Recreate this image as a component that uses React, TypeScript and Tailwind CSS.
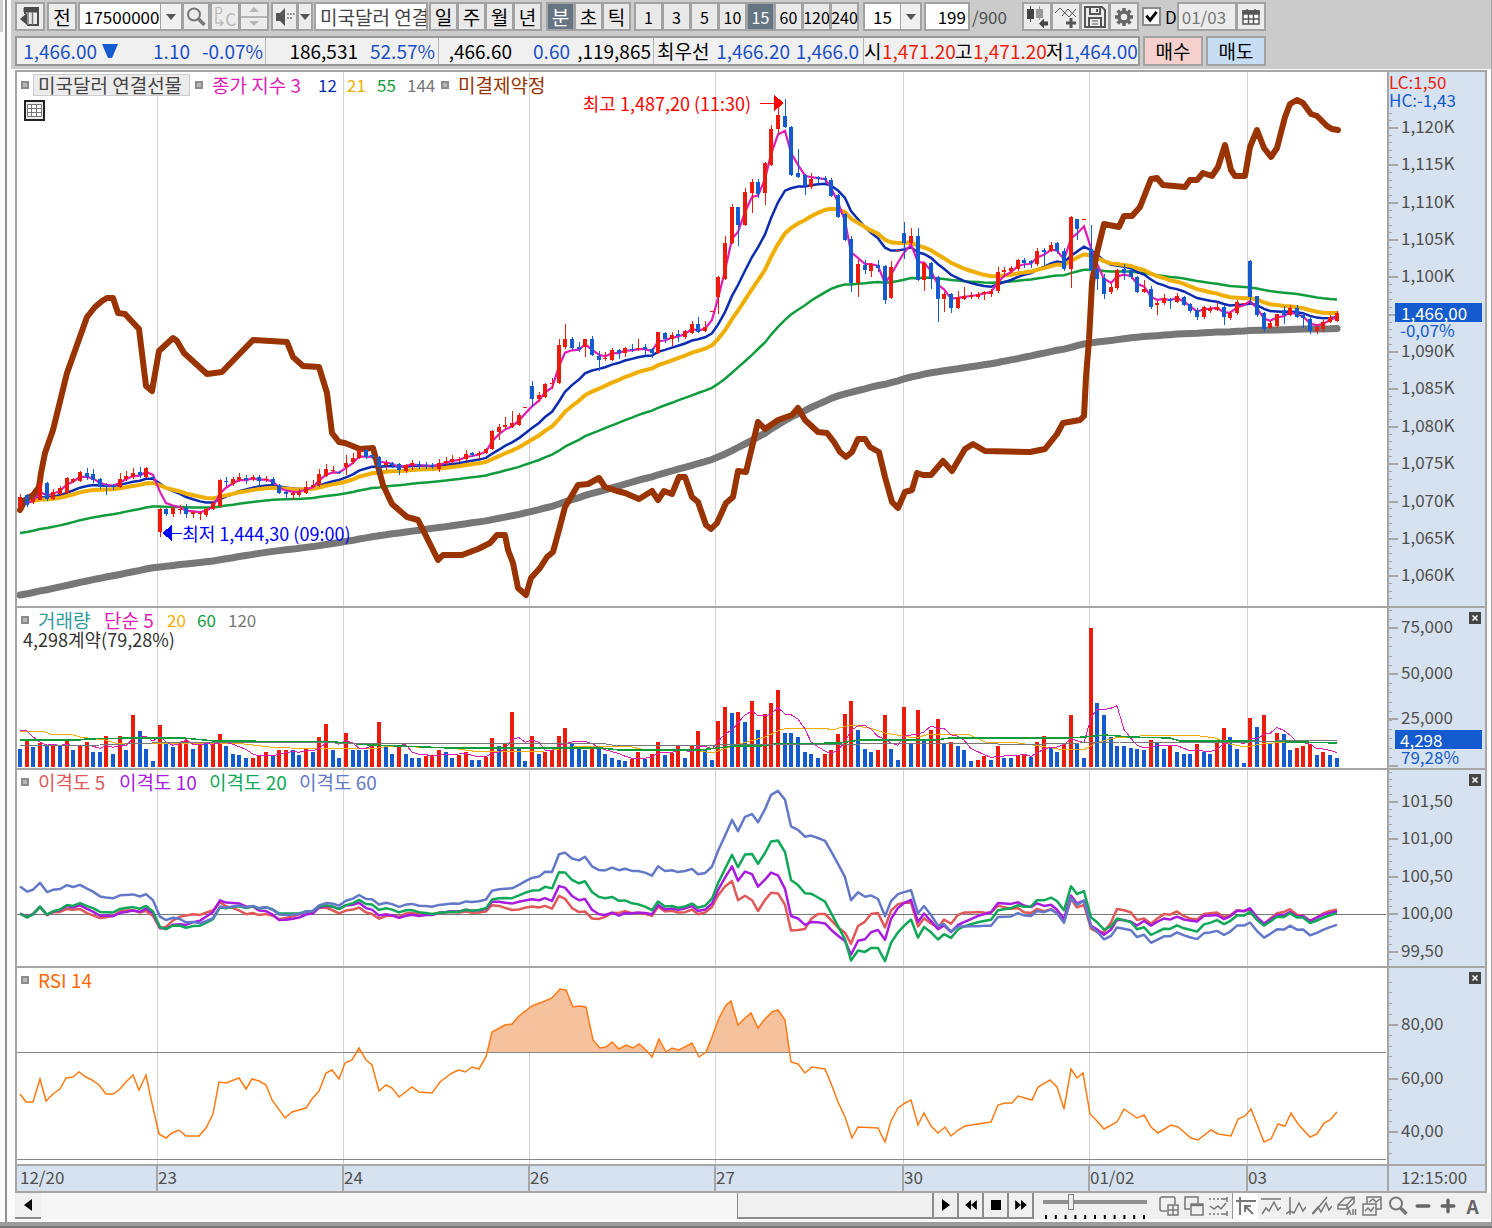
import type { ReactNode } from "react";
import { Minus, Plus } from "lucide-react";

const UP = "#eb1c0c";
const DOWN = "#135bce";

const PLOT_LEFT = 17;
const PLOT_WIDTH = 1370;
const FIRST_BAR = 20;
const BAR_STEP = 6.65;

const barX = (i: number) => Math.round(FIRST_BAR + i * BAR_STEP);

// direction, high, body top, body bottom, low
const CANDLES = `
R494,497,507,509 B494,495,505,507 R498,499,502,504 R477,483,500,500 B482,483,499,501 R489,492,499,500 R486,488,494,496
R477,478,493,494 R478,479,482,483 R471,472,481,482 B468,473,477,480 B469,474,480,483 B478,479,487,489 B483,485,487,495
B484,485,487,490 R473,479,487,488 R471,476,479,481 R468,473,477,479 B467,472,475,478 R467,468,477,478 B476,477,478,479
R508,509,532,537 B508,509,514,516 R507,508,514,517 R505,509,510,514 B504,508,514,518 R511,512,514,518 R511,513,514,520
R508,509,515,517 R501,503,509,510 R479,480,506,508 B477,481,482,486 R477,479,484,486 R473,477,480,482 B475,478,480,484
R475,477,479,481 B475,477,481,486 R476,479,480,482 B477,479,484,485 B484,485,493,494 B490,492,494,499 R492,493,495,500
R489,492,495,497 R481,487,493,494 R480,485,487,488 R469,474,485,487 R464,469,476,477 R466,470,471,473 B471,472,473,474
R455,463,467,475 R453,458,462,464 R449,450,458,459 B449,450,457,459 B454,455,457,459 B456,457,467,475 R460,463,465,470
B462,463,465,468 B463,464,470,475 R464,465,471,473 R460,463,465,470 B461,464,466,469 B462,465,466,469 B463,465,467,469
R459,463,469,472 R457,461,463,466 R455,459,462,464 R457,459,460,462 R450,454,459,461 B452,453,455,457 R451,453,455,459
R448,449,453,454 R430,431,449,450 R424,427,432,440 R417,425,427,429 R411,423,427,428 R413,415,425,426 R407,407,408,408
B381,386,399,407 R392,395,399,402 R383,384,397,398 R378,383,384,389 R339,345,383,384 R324,339,347,349 B337,339,348,350
B342,347,349,352 R339,339,347,357 B336,339,355,356 B351,356,360,371 R352,358,359,361 R348,350,360,361 B349,350,353,359
R347,348,353,357 B344,349,350,352 R339,348,349,351 B344,347,349,356 B348,349,353,358 R332,332,353,354 B332,333,339,343
R332,335,339,346 B330,334,336,342 R330,331,337,339 R321,324,333,334 B317,324,332,333 R321,327,331,332 R311,311,312,312
R276,277,297,314 R236,243,279,280 R204,207,243,244 B207,207,225,246 R188,192,225,226 R179,182,193,213 B179,182,194,198
R162,163,193,205 R125,129,165,166 R106,115,129,134 B99,116,127,128 B126,127,175,176 B149,173,177,178 B174,175,186,195
R173,179,187,189 B176,177,179,183 B176,178,180,184 B178,180,196,197 B194,195,217,218 B213,214,240,241 B236,239,283,292
R260,264,283,297 B260,265,270,274 R263,264,271,277 B260,265,268,272 B265,266,300,304 R261,267,298,299 R250,250,251,251
B222,233,243,259 R228,236,243,244 B228,236,280,281 R262,263,280,291 B262,263,279,289 B276,277,299,322 R292,294,299,312
B293,294,308,313 R291,297,308,309 R287,296,299,300 R292,295,297,299 R292,294,297,299 R291,292,294,300 R289,291,294,297
R267,272,291,293 R267,270,272,276 R266,268,271,273 R259,260,269,271 B258,260,263,268 B260,261,263,268 R248,251,264,266
B248,250,252,265 R242,245,251,252 B242,243,251,254 B248,251,269,271 R216,217,269,288 B219,219,229,240 R219,219,220,220
B225,249,270,272 B268,269,279,290 B274,278,294,299 R283,287,292,294 R269,270,288,290 B264,269,273,280 B268,270,277,279
B276,277,292,293 R280,289,292,293 B286,289,307,309 R301,303,305,315 R294,298,303,305 B298,299,301,309 R293,296,302,303
B296,297,305,306 B303,304,311,313 B308,310,317,320 R306,307,317,319 R306,308,311,313 R302,307,310,311 B305,307,317,325
R311,313,318,320 R300,302,313,315 R303,303,304,304 B260,261,297,304 B296,296,315,317 B312,313,329,332 R320,323,328,329
R314,314,326,328 B306,310,315,324 R305,308,315,316 B305,308,317,318 B313,315,318,328 B317,319,331,334 R325,327,331,334
R320,322,329,332 R315,317,322,323 R311,313,321,322
`.trim().split(/\s+/).map((row) => {
  const [high, top, bottom, low] = row.slice(1).split(",").map(Number);
  const up = row[0] === "R";
  return { up, high, top, bottom, low, close: up ? top : bottom };
});

const VOLUMES = `
B18 R26 B20 R24 B21 R22 B21 R26 B17 R21 R25 B15 B15 R31 B13 R31 B17 R52 B36 B18 B6 R42 B23 B20 R25 R27 B18 R23 B23 R23
R33 B21 B13 B12 B9 R9 R12 R15 B11 R17 R17 B17 B12 R19 B15 R30 R43 B17 B9 R34 B17 B17 B17 R21 R45 B20 B13 R20 B13 B9 B9
R11 R12 R17 B15 B9 R12 R15 B7 B7 R10 R29 B21 R23 R55 B19 B6 R31 B13 R15 R17 R31 R39 B23 B19 B17 R19 B19 B13 B9 B7 B6
R8 R15 B8 R13 R25 B12 R14 R21 B9 R21 R36 B17 B7 R46 R60 B54 R55 B45 R66 B37 R53 R64 R77 B34 B34 B30 B15 B13 B9 R13 R17
R33 R53 R66 B37 B18 B15 R17 R52 B18 B7 R60 B23 R57 B28 R37 R48 B23 R25 B21 B17 B6 R7 R11 B7 R21 B9 B9 R12 R13 B10 R25
R31 B19 B15 R23 R52 B23 B9 R139 B64 B52 B30 B21 B21 B19 B18 B17 R27 B25 B18 R22 B15 B13 B13 R23 B15 B13 R25 R39 B30 B18
B4 R49 B40 R52 B23 R34 B33 B17 R19 R21 R23 B12 R15 B12 B9
`.trim().split(/\s+/).map((v) => ({ up: v[0] === "R", size: Number(v.slice(1)) }));

const OPEN_INTEREST =
  "20,510 25,500 33,495 39,487 41,473 45,453 53,430 67,373 87,317 95,307 102,301 107,298 113,298 118,313 125,314 139,329 146,386 152,391 159,351 173,338 177,341 184,353 195,363 207,374 222,372 253,340 287,342 293,357 303,366 319,367 327,393 332,433 339,442 345,443 360,449 373,448 383,485 392,504 407,517 418,520 428,540 438,560 443,555 462,555 478,549 490,543 497,535 505,535 508,550 513,563 518,588 526,595 531,578 540,568 547,557 553,552 559,530 565,507 578,485 588,484 599,478 605,487 617,491 625,493 639,499 652,491 658,500 664,491 672,494 679,477 685,477 692,497 698,502 706,525 711,529 717,523 726,503 733,497 738,471 746,472 753,443 758,422 765,429 778,420 792,415 798,408 805,420 818,432 827,433 834,442 840,452 846,457 852,452 858,439 865,439 870,447 879,452 885,477 892,502 898,508 905,492 912,490 917,473 923,475 931,475 943,461 952,471 965,449 973,444 985,451 1030,452 1045,449 1057,434 1063,423 1080,420 1084,416 1086,377 1089,340 1092,283 1096,257 1104,224 1119,227 1124,216 1132,216 1140,207 1151,179 1157,178 1163,185 1185,187 1190,180 1197,180 1203,173 1212,176 1218,167 1225,145 1231,170 1235,176 1245,176 1250,147 1257,130 1264,148 1271,157 1277,148 1285,117 1290,104 1297,100 1303,103 1311,114 1317,116 1327,126 1332,129 1338,130";

const VOLUME_MA20 =
  "20,731 43,731 50,734 70,734 80,737 105,740 115,743 150,744 190,743 235,743 270,747 290,748 372,749 390,746 415,747 450,748 480,752 545,751 580,746 628,746 645,750 700,751 712,753 730,747 750,741 765,737 780,730 788,728 825,728 832,730 850,725 870,728 885,733 915,738 930,734 968,734 985,742 1010,742 1040,746 1058,749 1084,750 1095,743 1115,738 1140,736 1170,735 1200,736 1215,738 1230,744 1245,747 1262,744 1285,742 1337,742";
const VOLUME_MA60 =
  "20,740 80,740 85,739 130,738 183,738 215,741 255,741 260,742 335,742 370,745 400,746 450,748 600,748 620,750 700,750 735,746 760,746 775,744 840,743 860,740 935,740 950,738 1065,738 1085,737 1105,735 1130,737 1170,738 1180,741 1240,741 1300,742 1337,743";
const VOLUME_MA120 =
  "20,746 100,745 125,744 180,742 335,743 600,743 612,745 720,745 860,744 900,743 985,743 1010,745 1080,743 1120,742 1250,742 1300,740 1337,740";

const RSI =
  "20,1094 26,1102 33,1102 40,1079 46,1101 53,1094 60,1089 66,1078 73,1077 79,1072 86,1077 92,1080 99,1085 106,1094 113,1094 119,1090 126,1082 133,1075 139,1090 146,1075 151,1099 159,1134 166,1138 172,1133 179,1130 186,1136 199,1136 206,1128 213,1114 219,1082 226,1083 239,1078 246,1089 252,1079 259,1081 266,1085 272,1100 285,1118 292,1112 306,1108 312,1099 319,1091 326,1073 332,1070 339,1079 345,1063 352,1060 359,1048 366,1060 372,1065 379,1091 386,1085 392,1088 399,1097 412,1087 419,1092 432,1093 440,1082 452,1073 459,1070 465,1072 472,1067 479,1069 486,1057 492,1032 505,1025 512,1024 519,1016 532,1006 545,1001 552,998 560,989 566,990 573,1007 579,1006 586,1007 593,1040 600,1048 606,1047 612,1042 619,1049 626,1045 633,1048 639,1044 646,1050 652,1057 659,1039 666,1052 672,1048 679,1050 692,1043 699,1057 706,1052 712,1037 719,1018 726,1005 731,1001 738,1025 745,1018 751,1013 758,1028 765,1019 772,1012 778,1010 785,1020 791,1062 798,1064 805,1073 812,1067 825,1069 832,1086 838,1102 845,1117 852,1138 858,1127 878,1128 885,1142 891,1121 898,1108 905,1103 911,1100 918,1125 924,1113 931,1126 938,1133 945,1127 951,1136 958,1130 965,1126 991,1122 998,1105 1005,1103 1012,1103 1018,1096 1032,1100 1038,1087 1050,1080 1057,1087 1064,1109 1071,1069 1077,1078 1083,1073 1090,1114 1097,1121 1104,1129 1117,1122 1124,1109 1137,1118 1144,1115 1151,1127 1158,1133 1171,1125 1178,1127 1191,1138 1198,1140 1211,1130 1218,1134 1231,1136 1238,1119 1245,1116 1251,1109 1264,1142 1271,1139 1278,1124 1285,1126 1291,1113 1298,1124 1310,1137 1317,1134 1324,1123 1330,1120 1337,1112";

const closes = CANDLES.map((c) => c.close);

// closes of the bars before the first visible one, oldest first
const HISTORY = [...Array(12).fill(634), ...Array(15).fill(602), ...Array(32).fill(498)] as number[];

function ema(length: number, seed: number) {
  const k = 2 / (length + 1);
  let prev = seed;
  return closes.map((c, i) => {
    prev = i === 0 ? seed : prev + k * (c - prev);
    return `${barX(i)},${prev.toFixed(1)}`;
  }).join(" ");
}

const toPrice = (y: number) => 1487.2 - (y - 99) * 0.0979;

function disparity(length: number) {
  const series = [...HISTORY, ...closes].map(toPrice);
  return closes.map((_, i) => {
    const end = HISTORY.length + i + 1;
    const avg = series.slice(end - length, end).reduce((a, b) => a + b, 0) / length;
    const value = (series[end - 1] / avg) * 100;
    return `${barX(i)},${(914 - (value - 100) * 75).toFixed(1)}`;
  }).join(" ");
}

const volumeMa5 = VOLUMES.map((_, i) => {
  const lead = [37, 36, 30, 25];
  const avg = i < 4 ? lead[i] : VOLUMES.slice(i - 4, i + 1).reduce((a, v) => a + v.size, 0) / 5;
  return `${barX(i)},${(767 - avg).toFixed(1)}`;
}).join(" ");

const DAYS = [
  { x: 157, label: "23" },
  { x: 343, label: "24" },
  { x: 529, label: "26" },
  { x: 715, label: "27" },
  { x: 903, label: "30" },
  { x: 1089, label: "01/02" },
  { x: 1247, label: "03" }
];

type Tick = { y: number; label?: string };

const priceTicks: Tick[] = [1120, 1115, 1110, 1105, 1100, 1095, 1090, 1085, 1080, 1075, 1070, 1065, 1060].map((v, i) => ({
  y: 128 + i * 37.35,
  label: v === 1095 ? undefined : `1,${String(v).slice(1)}K`
}));
const volumeTicks: Tick[] = [{ y: 628, label: "75,000" }, { y: 674, label: "50,000" }, { y: 719, label: "25,000" }, { y: 766 }];
const disparityTicks: Tick[] = ["101,50", "101,00", "100,50", "100,00", "99,50"].map((label, i) => ({ y: 802 + i * 37.4, label }));
const rsiTicks: Tick[] = ["80,00", "60,00", "40,00"].map((label, i) => ({ y: 1025 + i * 53.5, label }));

function minorTicks(from: number, to: number, step: number) {
  const list: number[] = [];
  for (let y = from; y < to; y += step) list.push(y);
  return list;
}

type PanelProps = {
  top: number;
  height: number;
  className: string;
  ticks: Tick[];
  minor: number[];
  closable?: boolean;
  chart: ReactNode;
  axis?: ReactNode;
  children: ReactNode;
};

function Panel({ top, height, className, ticks, minor, closable, chart, axis, children }: PanelProps) {
  const pct = (y: number) => `${((y - top) / height) * 100}%`;
  return (
    <section className={`flex border-b-2 border-[#a6a6a6] ${className}`}>
      <div className="relative min-w-0 flex-1 bg-white">
        <svg
          className="absolute inset-0 h-full w-full"
          viewBox={`${PLOT_LEFT} ${top} ${PLOT_WIDTH} ${height}`}
          preserveAspectRatio="none"
          shapeRendering="crispEdges"
          fill="none"
        >
          {DAYS.map((d) => (
            <path key={d.x} d={`M${d.x} ${top}V${top + height}`} stroke="#d3d3d3" />
          ))}
          {chart}
        </svg>
        {children}
      </div>
      <div className="relative w-[98px] shrink-0 border-l-2 border-[#a6a6a6] bg-[#d6e2ef] text-[#505050]">
        <svg
          className="absolute top-0 left-0 h-full w-3"
          viewBox={`0 ${top} 12 ${height}`}
          preserveAspectRatio="none"
          shapeRendering="crispEdges"
          stroke="#a6a6a6"
        >
          {minor.map((y) => (
            <path key={y} d={`M0 ${y}h3`} />
          ))}
          {ticks.map((t) => (
            <path key={t.y} d={`M0 ${t.y}h9`} strokeWidth={2} />
          ))}
        </svg>
        {ticks.map((t) =>
          t.label ? (
            <span key={t.y} className="absolute left-3 -translate-y-1/2 leading-5" style={{ top: pct(t.y - 2) }}>
              {t.label}
            </span>
          ) : null
        )}
        {axis}
        {closable && (
          <button type="button" aria-label="닫기" className="absolute top-1 right-1 grid h-3 w-3 place-items-center bg-[#444]">
            <svg viewBox="0 0 12 12" className="h-3 w-3" stroke="#fff" strokeWidth={1.5}>
              <path d="M3.5 3.5l5 5M8.5 3.5l-5 5" />
            </svg>
          </button>
        )}
      </div>
    </section>
  );
}

function Marker() {
  return <span className="h-2 w-2 shrink-0 border-2 border-[#8c8c8c] bg-[#b8b8b8]" />;
}

function Magnifier() {
  return (
    <svg viewBox="0 0 20 20" className="h-5 w-5 shrink-0" fill="none" stroke="#777">
      <circle cx="8" cy="7.500" r="6" strokeWidth={2} />
      <path d="M12.500 12l6 6" strokeWidth={3.5} />
    </svg>
  );
}

const toolButton = "flex h-full shrink-0 items-center justify-center border-2 border-[#a2a2a2] bg-[#ececec]";

function PeriodGroup({ items, active }: { items: string[]; active?: string }) {
  return (
    <div className="flex h-full border-l border-[#a2a2a2]">
      {items.map((item) => (
        <button
          key={item}
          type="button"
          aria-pressed={item === active}
          className={`-ml-px flex w-[29px] items-center justify-center border-2 border-[#a2a2a2] ${
            item === active ? "bg-[#667583] text-white" : "bg-[#e9e9e9] text-black"
          }`}
        >
          {item}
        </button>
      ))}
    </div>
  );
}

function Caret() {
  return (
    <svg viewBox="0 0 10 6" className="h-[6px] w-[10px] shrink-0" fill="#555">
      <path d="M0 0h10L5 6z" />
    </svg>
  );
}

function Toolbar() {
  return (
    <div className="flex h-[29px] items-center whitespace-nowrap">
      <button type="button" aria-label="패널" className={`${toolButton} w-[30px]`}>
        <svg viewBox="0 0 20 20" className="h-5 w-5 shrink-0" fill="none" stroke="#4a4a4a">
          <path d="M4 1h14v17H7M5 1v6" strokeWidth={2} />
          <path d="M4 1h14v4H4z" fill="#4a4a4a" />
          <path d="M8 5v13M12.500 5v13" strokeWidth={1.5} stroke="#777" />
          <path d="M0 12l7-6v12z" fill="#4a4a4a" stroke="none" />
        </svg>
      </button>
      <button type="button" className={`${toolButton} ml-[2px] w-[30px] text-[19px]`}>전</button>
      <div className="ml-px flex h-full border-2 border-[#a2a2a2]">
        <input aria-label="종목코드" defaultValue="17500000" className="w-[80px] bg-white pl-1 outline-none" />
        <button type="button" aria-label="종목 목록" className="grid w-[21px] place-items-center border-l border-[#a2a2a2] bg-[#f0f0f0]">
          <Caret />
        </button>
      </div>
      <button type="button" aria-label="종목 검색" className={`${toolButton} -ml-px w-[28px]`}>
        <Magnifier />
      </button>
      <button type="button" aria-label="P/C" className={`${toolButton} w-[30px]`}>
        <span className="relative block h-full w-full text-[#b8b8b8]">
          <span className="absolute top-[2px] left-[2px] text-sm leading-[12px]">P</span>
          <span className="absolute right-[2px] bottom-[2px] text-[17px] leading-[16px]">C</span>
          <svg viewBox="0 0 10 8" className="absolute bottom-[3px] left-[2px] h-2 w-[10px]" fill="none" stroke="#b8b8b8" strokeWidth={1.5}>
            <path d="M2 0v5h7M6 2l3 3-3 3" />
          </svg>
        </span>
      </button>
      <div className="-ml-px flex h-full w-[30px] flex-col border-2 border-[#a2a2a2] bg-[#ececec]">
        <button type="button" aria-label="위로" className="grid flex-1 place-items-center border-b-2 border-[#b5b5b5]">
          <svg viewBox="0 0 10 5" className="h-[5px] w-[10px]" fill="#b5b5b5"><path d="M0 5h10L5 0z" /></svg>
        </button>
        <button type="button" aria-label="아래로" className="grid flex-1 place-items-center">
          <svg viewBox="0 0 10 5" className="h-[5px] w-[10px]" fill="#b5b5b5"><path d="M0 0h10L5 5z" /></svg>
        </button>
      </div>
      <button type="button" aria-label="소리" className={`${toolButton} ml-[2px] w-[27px]`}>
        <svg viewBox="0 0 20 18" className="h-[18px] w-5 shrink-0" fill="#555">
          <path d="M1 5h4l5-5v18l-5-5H1z" />
          <path d="M12 5h2v2h-2zM15 5h2v2h-2zM18 5h2v2h-2zM12 9h2v2h-2zM15 9h2v2h-2z" fill="#999" />
        </svg>
      </button>
      <button type="button" aria-label="소리 설정" className={`${toolButton} -ml-px w-[16px]`}>
        <Caret />
      </button>
      <input aria-label="종목명" defaultValue="미국달러 연결선물" className="ml-px h-full w-[114px] border-2 border-[#a2a2a2] bg-white pl-1 text-[19px] text-[#444] outline-none" />
      <div className="ml-px h-full text-[19px]"><PeriodGroup items={["일", "주", "월", "년"]} /></div>
      <div className="ml-[4px] h-full text-[19px]"><PeriodGroup items={["분", "초", "틱"]} active="분" /></div>
      <div className="ml-[3px] h-full text-base"><PeriodGroup items={["1", "3", "5", "10", "15", "60", "120", "240"]} active="15" /></div>
      <div className="relative ml-1 h-full w-[59px]">
        <select aria-label="분 간격" className="h-full w-full appearance-none border-2 border-[#a2a2a2] bg-white pl-2 outline-none">
          <option>15</option>
        </select>
        <span className="pointer-events-none absolute inset-y-[2px] right-[2px] grid w-[20px] place-items-center border-l border-[#a2a2a2] bg-[#f0f0f0]">
          <Caret />
        </span>
      </div>
      <input aria-label="조회 봉수" defaultValue="199" className="ml-[2px] h-full w-[46px] border-2 border-[#a2a2a2] bg-white pr-[2px] text-right outline-none" />
      <span className="ml-[2px] w-[50px] text-[#505050]">/900</span>
      <button type="button" aria-label="봉 추가" className={`${toolButton} w-[30px]`}>
        <svg viewBox="0 0 24 22" className="h-[22px] w-6 shrink-0" fill="#444">
          <path d="M2 3h7v10H2zM5 0h1v16H5z" />
          <path d="M11 3h7v9h-7zM14 0h1v14h-1z" fill="#999" />
          <path d="M14 17.500l5-5v3h4v4h-4v3z" />
        </svg>
      </button>
      <button type="button" aria-label="지표 추가" className={`${toolButton} -ml-px w-[30px]`}>
        <svg viewBox="0 0 24 22" className="h-[22px] w-6 shrink-0" fill="none" stroke="#555">
          <path d="M1 7l5-5 9 9 7-8M8 10l6-7 8 8" />
          <path d="M17 12v10M12 17h10" strokeWidth={3} />
        </svg>
      </button>
      <button type="button" aria-label="저장" className={`${toolButton} -ml-px w-[30px]`}>
        <svg viewBox="0 0 22 22" className="h-[22px] w-[22px] shrink-0" fill="none" stroke="#555" strokeWidth={2}>
          <path d="M1 1h17l3 3v17H1zM6 1v7h10V1M13 3v3M5 21v-9h12v9" />
          <path d="M8 15h6M8 18h6" strokeWidth={1} />
        </svg>
      </button>
      <button type="button" aria-label="설정" className={`${toolButton} -ml-px w-[30px]`}>
        <svg viewBox="0 0 20 20" className="h-5 w-5 shrink-0" fill="none" stroke="#666">
          <circle cx="10" cy="10" r="5" strokeWidth={3.5} />
          <path d="M10 1v3M10 16v3M1 10h3M16 10h3M3.600 3.600l2 2M14.400 14.400l2 2M3.600 16.400l2-2M14.400 5.600l2-2" strokeWidth={3.5} />
        </svg>
      </button>
      <label className="ml-[3px] flex items-center gap-1">
        <span className="relative grid h-[19px] w-[19px] place-items-center">
          <input type="checkbox" defaultChecked className="peer h-full w-full appearance-none border-2 border-[#8c8c8c] bg-white" />
          <svg viewBox="0 0 14 14" className="pointer-events-none absolute hidden h-[13px] w-[13px] peer-checked:block" fill="none" stroke="#000" strokeWidth={3}>
            <path d="M1.500 6l4 5L12.500 2" />
          </svg>
        </span>
        D
      </label>
      <input aria-label="조회일" defaultValue="01/03" className="h-full w-[60px] border-2 border-[#a2a2a2] bg-[#ececec] pl-[3px] text-[#777] outline-none" />
      <button type="button" aria-label="달력" className={`${toolButton} -ml-px w-[30px]`}>
        <svg viewBox="0 0 18 16" className="h-4 w-[18px] shrink-0" fill="#fff" stroke="#555" strokeWidth={1.5}>
          <path d="M1 2h16v13H1z" />
          <path d="M1 2h16v3H1z" fill="#555" />
          <path d="M1 10h16M6.500 5v10M11.500 5v10M5 0v3M13 0v3" />
        </svg>
      </button>
    </div>
  );
}

const cell = "flex h-full shrink-0 items-center border-r border-[#b5b5b5]";

function QuoteBar() {
  return (
    <div className="mt-[5px] flex h-[30px] text-[19px] whitespace-nowrap">
      <div className="flex w-[1125px] items-center overflow-hidden border-2 border-[#999] bg-[#f0f0f0] text-[#1c50c8]">
        <div className={`${cell} w-[249px]`}>
          <span className="w-[80px] text-right">1,466.00</span>
          <svg viewBox="0 0 16 14" className="ml-[5px] h-[14px] w-4 shrink-0" fill="#135bce"><path d="M0 0h16l-6 14H6z" /></svg>
          <span className="w-[72px] text-right">1.10</span>
          <span className="w-[73px] text-right">-0.07%</span>
        </div>
        <div className={`${cell} w-[173px]`}>
          <span className="w-[92px] text-right text-black">186,531</span>
          <span className="w-[77px] text-right">52.57%</span>
        </div>
        <div className={`${cell} w-[215px] text-black`}>
          <span className="w-[73px] text-right">,466.60</span>
          <span className="w-[58px] text-right text-[#1c50c8]">0.60</span>
          <span className="w-[81px] text-right">,119,865</span>
        </div>
        <div className={`${cell} w-[210px]`}>
          <span className="ml-[3px] w-[56px] text-black">최우선</span>
          <span className="w-[77px] text-right">1,466.20</span>
          <span className="w-[69px] text-right">1,466.0</span>
        </div>
        <span className="w-[18px] text-black">시</span>
        <span className="w-[73px] text-right text-[#eb1c0c]">1,471.20</span>
        <span className="w-[18px] text-black">고</span>
        <span className="w-[73px] text-right text-[#eb1c0c]">1,471.20</span>
        <span className="w-[18px] text-black">저</span>
        <span className="w-[73px] text-right">1,464.00</span>
      </div>
      <button type="button" className="ml-[3px] w-[60px] border-2 border-[#a2a2a2] bg-[#f5d0cc]">매수</button>
      <button type="button" className="ml-[3px] w-[60px] border-2 border-[#a2a2a2] bg-[#c6def4]">매도</button>
    </div>
  );
}

function PricePanel() {
  return (
    <Panel
      top={72}
      height={534}
      className="min-h-[534px] flex-1"
      ticks={priceTicks}
      minor={minorTicks(113, 606, 7.47)}
      chart={
        <>
          <g shapeRendering="auto">
            <polyline points={ema(144, 595)} stroke="#777" strokeWidth={7} strokeLinecap="round" />
            <polyline points={ema(55, 533)} stroke="#109c3c" strokeWidth={2.5} />
            <polyline points={ema(12, 499)} stroke="#0c2cb0" strokeWidth={2.5} />
            <polyline points={ema(21, 501)} stroke="#f0ae00" strokeWidth={4} />
            <polyline points={ema(3, 501)} stroke="#e01cb4" strokeWidth={2.2} />
            <polyline points={OPEN_INTEREST} stroke="#993300" strokeWidth={6} strokeLinejoin="round" strokeLinecap="round" />
          </g>
          {CANDLES.map((c, i) => (
            <g key={i} fill={c.up ? UP : DOWN}>
              <rect x={barX(i)} y={c.high} width={1} height={c.low - c.high} />
              <rect x={barX(i) - 2} y={c.top} width={4} height={c.bottom - c.top} />
            </g>
          ))}
        </>
      }
      axis={
        <>
          <p className="absolute top-px left-0 leading-[18px]">
            <span className="block text-[#eb1c0c]">LC:1,50</span>
            <span className="block text-[#135bce]">HC:-1,43</span>
          </p>
          <p className="absolute top-[43.3%] left-[6px] w-[87px] text-[#135bce]">
            <span className="block h-[19px] bg-[#135bce] pl-[6px] leading-[19px] text-white">1,466,00</span>
            <span className="block pl-[5px] leading-4">-0,07%</span>
          </p>
        </>
      }
    >
      <div className="absolute top-[2px] left-[4px] flex h-[22px] items-center whitespace-nowrap">
        <Marker />
        <span className="ml-1 w-[157px] border border-[#ccc] bg-[#ececec] px-1 text-[19px] leading-5 text-[#444]">미국달러 연결선물</span>
        <span className="ml-[5px] flex"><Marker /></span>
        <span className="ml-[9px] w-[106px] text-[19px] text-[#e01cb4]">종가 지수 3</span>
        <span className="w-[29px] text-[#0c2cb0]">12</span>
        <span className="w-[30px] text-[#f0ae00]">21</span>
        <span className="w-[30px] text-[#109c3c]">55</span>
        <span className="w-[34px] text-[#777]">144</span>
        <Marker />
        <span className="ml-[9px] text-[19px] text-[#993300]">미결제약정</span>
      </div>
      <button type="button" aria-label="데이터 표" className="absolute top-[28px] left-[7px] grid h-[21px] w-[21px] place-items-center border-2 border-[#222] bg-[#ececec]">
        <svg viewBox="0 0 15 15" className="h-[15px] w-[15px]" fill="#fff" stroke="#777">
          <path d="M.5 1.500h14v12H.5zM.5 5.500h14M.5 9.500h14M4.500 1.500v12M9.500 1.500v12" />
        </svg>
      </button>
      <p className="absolute top-[4%] left-[41.300%] flex items-center text-[18px] leading-5 whitespace-nowrap text-[#ff0000]">
        최고 1,487,20 (11:30)
        <svg viewBox="0 0 24 16" className="ml-[9px] h-4 w-6" fill="#ff0000" shapeRendering="crispEdges">
          <path d="M0 7.500h14v1H0zM14 0l10 8-10 8z" />
        </svg>
      </p>
      <p className="absolute top-[84.500%] left-[10.600%] flex items-center text-[18px] leading-5 whitespace-nowrap text-[#0000ff]">
        <svg viewBox="0 0 20 16" className="h-4 w-5" fill="#0000ff" shapeRendering="crispEdges">
          <path d="M20 7.500h-10v1h10zM10 0L0 8l10 8z" />
        </svg>
        최저 1,444,30 (09:00)
      </p>
    </Panel>
  );
}

function VolumePanel() {
  return (
    <Panel
      top={608}
      height={160}
      className="h-[162px]"
      ticks={volumeTicks}
      minor={minorTicks(610, 766, 9.2)}
      closable
      chart={
        <>
          {VOLUMES.map((v, i) => (
            <rect key={i} x={barX(i) - 2} y={767 - v.size} width={4} height={v.size} fill={v.up ? UP : DOWN} />
          ))}
          <polyline points={VOLUME_MA20} stroke="#f0ae00" />
          <polyline points={volumeMa5} stroke="#e01cb4" />
          <polyline points={VOLUME_MA60} stroke="#109c3c" strokeWidth={1.5} />
          <polyline points={VOLUME_MA120} stroke="#777" />
        </>
      }
      axis={
        <p className="absolute top-[122px] left-[6px] w-[87px] text-[#135bce]">
          <span className="block h-[19px] bg-[#135bce] pl-[5px] leading-[19px] text-white">4,298</span>
          <span className="block pl-[6px] leading-4">79,28%</span>
        </p>
      }
    >
      <div className="absolute top-[2px] left-[4px] flex h-5 items-center whitespace-nowrap">
        <Marker />
        <span className="ml-[9px] w-[66px] text-[19px] text-[#2f9c9c]">거래량</span>
        <span className="w-[63px] text-[19px] text-[#e01cb4]">단순 5</span>
        <span className="w-[30px] text-[#f0ae00]">20</span>
        <span className="w-[31px] text-[#109c3c]">60</span>
        <span className="text-[#777]">120</span>
      </div>
      <p className="absolute top-[21px] left-[6px] text-[18px] leading-5 text-[#333]">4,298계약(79,28%)</p>
    </Panel>
  );
}

function DisparityPanel() {
  return (
    <Panel
      top={770}
      height={196}
      className="h-[198px]"
      ticks={disparityTicks}
      minor={minorTicks(772, 966, 7.48)}
      closable
      chart={
        <>
          <path d="M17 914H1386" stroke="#777" />
          <g strokeWidth={2.5} shapeRendering="auto" strokeLinejoin="round">
            <polyline points={disparity(5)} stroke="#e05858" />
            <polyline points={disparity(10)} stroke="#a81ce0" />
            <polyline points={disparity(20)} stroke="#10a858" />
            <polyline points={disparity(60)} stroke="#6478c8" />
          </g>
        </>
      }
    >
      <div className="absolute top-[2px] left-[4px] flex h-5 items-center text-[19px] whitespace-nowrap">
        <Marker />
        <span className="ml-[9px] w-[81px] text-[#e05858]">이격도 5</span>
        <span className="w-[90px] text-[#a81ce0]">이격도 10</span>
        <span className="w-[90px] text-[#10a858]">이격도 20</span>
        <span className="text-[#6478c8]">이격도 60</span>
      </div>
    </Panel>
  );
}

function RsiPanel() {
  return (
    <Panel
      top={968}
      height={196}
      className="h-[198px]"
      ticks={rsiTicks}
      minor={minorTicks(982, 1158, 10.7)}
      closable
      chart={
        <>
          <clipPath id="overbought">
            <rect x="17" y="968" width="1370" height="84" />
          </clipPath>
          <polygon points={`20,1164 ${RSI} 1337,1164`} fill="#f6c19d" clipPath="url(#overbought)" />
          <path d="M17 1052.500H1386M17 1159H1386" stroke="#888" />
          <polyline points={RSI} stroke="#ff7a14" strokeWidth={1.5} shapeRendering="auto" />
        </>
      }
    >
      <div className="absolute top-[2px] left-[4px] flex h-5 items-center text-[19px]">
        <Marker />
        <span className="ml-[9px] text-[#ff6a00]">RSI 14</span>
      </div>
    </Panel>
  );
}

function DateAxis() {
  return (
    <div className="flex h-[25px] bg-[#d6e2ef] leading-[22px] text-[#505050]">
      <div className="relative flex-1 pl-[3px]">
        12/20
        {DAYS.map((d) => (
          <span
            key={d.x}
            className="absolute top-0 h-full border-l-2 border-[#a6a6a6]"
            style={{ left: `${((d.x - 1 - PLOT_LEFT) / PLOT_WIDTH) * 100}%` }}
          >
            {d.label}
          </span>
        ))}
      </div>
      <div className="w-[98px] border-l-2 border-[#a6a6a6] pl-3">12:15:00</div>
    </div>
  );
}

const drawTools: { name: string; pressed?: boolean; icon: ReactNode }[] = [
  {
    name: "차트 추가",
    icon: <path d="M8 15H3a2 2 0 01-2-2V3a2 2 0 012-2h11a2 2 0 012 2v5M9 9h10v10H9zM14 9v10M9 14h10" />
  },
  { name: "창 배열", icon: <path d="M6 13H1V1h13v6M7 8h12v11H7zM7 9.500h12" /> },
  {
    name: "기간 이동",
    icon: (
      <>
        <path d="M0 3h16M0 18h16" strokeDasharray="2 2" />
        <path d="M1 10l4 3 4-3 3 3 5-6M18 1v5M18 15v5M14 3h4M14 18h4" />
      </>
    )
  },
  {
    name: "선택",
    pressed: true,
    icon: (
      <>
        <path d="M0 5h20M4 1v18" strokeWidth={2} />
        <path d="M9 10l8 8M9 16v-6h6" strokeWidth={2} />
      </>
    )
  },
  { name: "수평선", icon: <path d="M0 3h20M1 18l4-6 3 3 5-9 4 8 3-3" /> },
  { name: "수직선", icon: <path d="M4 1v18M0 18l4-3 4 2 5-10 4 8 3-4" /> },
  { name: "추세선", icon: <path d="M1 18L15 1M0 18l6-7 3 5 5-9 3 7 3-4" /> },
  { name: "전체 지우기", icon: <path d="M1 9l7-7 9-1v6l-7 6H1zM1 9h9l7-8M10 9v4M10 19l2-5 2 5M16 13v6M18.500 13v6" /> },
  { name: "차트 겹치기", icon: <path d="M5 8V1h14v12h-5M1 8h13v11H1zM3 15l3-3 3 3 3-4M7 6l4-3 3 3 4-3" /> }
];

function BottomBar() {
  const key = "grid h-full w-[25px] shrink-0 place-items-center border-r-2 border-b-2 border-[#8c8c8c] bg-[#f0f0f0]";
  return (
    <div className="ml-1 flex h-[26px] bg-[#f0f0f0] pr-[6px]">
      <button type="button" aria-label="왼쪽" className="grid w-[26px] place-items-center border-b-2 border-[#8c8c8c] bg-[#f0f0f0]">
        <svg viewBox="0 0 8 12" className="h-3 w-2"><path d="M8 0v12L0 6z" /></svg>
      </button>
      <div className="flex flex-1 justify-end bg-[#f6f6f6]">
        <div className="w-[197px] border-r-2 border-b-2 border-l border-[#8c8c8c] bg-[#f0f0f0]" />
      </div>
      <button type="button" aria-label="재생" className={key}>
        <svg viewBox="0 0 8 12" className="h-3 w-2"><path d="M0 0v12l8-6z" /></svg>
      </button>
      <button type="button" aria-label="뒤로" className={key}>
        <svg viewBox="0 0 14 12" className="h-[10px] w-3"><path d="M7 0v12L0 6zM14 0v12L7 6z" /></svg>
      </button>
      <button type="button" aria-label="정지" className={key}>
        <span className="h-[10px] w-[10px] bg-black" />
      </button>
      <button type="button" aria-label="앞으로" className={key}>
        <svg viewBox="0 0 14 12" className="h-[10px] w-3"><path d="M0 0v12l7-6zM7 0v12l7-6z" /></svg>
      </button>
      <div className="relative ml-[9px] w-[104px] shrink-0">
        <input
          type="range"
          aria-label="재생 속도"
          min={0}
          max={8}
          defaultValue={2}
          className="absolute top-0 left-0 h-[18px] w-full appearance-none bg-transparent [&::-webkit-slider-runnable-track]:h-1 [&::-webkit-slider-runnable-track]:bg-[#909090] [&::-webkit-slider-thumb]:-mt-[6px] [&::-webkit-slider-thumb]:h-4 [&::-webkit-slider-thumb]:w-[6px] [&::-webkit-slider-thumb]:appearance-none [&::-webkit-slider-thumb]:border [&::-webkit-slider-thumb]:border-[#808080] [&::-webkit-slider-thumb]:bg-[#f0f0f0]"
        />
        <svg viewBox="0 0 104 4" className="absolute bottom-0 left-0 h-1 w-full" stroke="#000" strokeWidth={2}>
          {minorTicks(3, 104, 9.8).map((x) => (
            <path key={x} d={`M${x} 0v4`} />
          ))}
        </svg>
      </div>
      <div className="ml-[9px] flex w-[229px] shrink-0">
        {drawTools.map((t) => (
          <button
            key={t.name}
            type="button"
            aria-label={t.name}
            className={`grid flex-1 place-items-center ${t.pressed ? "border-l border-[#999] bg-white" : ""}`}
          >
            <svg viewBox="0 0 20 20" className="h-5 w-5" fill="none" stroke="#777" strokeWidth={1.5}>
              {t.icon}
            </svg>
          </button>
        ))}
      </div>
      <button type="button" aria-label="확대경" className="grid w-[25px] place-items-center"><Magnifier /></button>
      <button type="button" aria-label="축소" className="grid w-[25px] place-items-center"><Minus size={20} color="#666" strokeWidth={4} /></button>
      <button type="button" aria-label="확대" className="grid w-[25px] place-items-center"><Plus size={20} color="#666" strokeWidth={4} /></button>
      <button type="button" className="w-[25px] text-[19px] font-bold text-[#666]">A</button>
    </div>
  );
}

export default function App() {
  return (
    <div className="flex min-h-screen flex-col bg-[#fbfbfb] font-['Noto_Sans_CJK_KR',sans-serif] text-[17px] leading-6 text-black">
      <div className="flex flex-1">
        <div className="w-[7px] shrink-0 border-r-2 border-[#8f8f8f]">
          <div className="h-8 w-[3px] bg-[#d0d0d0]" />
        </div>
        <main className="ml-1 flex min-w-0 flex-1 flex-col border-r border-[#a6a6a6]">
          <header className="h-[69px] overflow-hidden bg-[#cbcbcb] pt-[2px] pl-1">
            <Toolbar />
            <QuoteBar />
          </header>
          <div className="mt-px mr-1 ml-1 flex flex-1 flex-col border-2 border-[#a6a6a6]">
            <PricePanel />
            <VolumePanel />
            <DisparityPanel />
            <RsiPanel />
            <DateAxis />
          </div>
          <BottomBar />
          <div className="h-[3px]" />
        </main>
      </div>
      <footer className="h-[6px] border-b-2 border-[#777] bg-[#9c9c9c]" />
    </div>
  );
}
